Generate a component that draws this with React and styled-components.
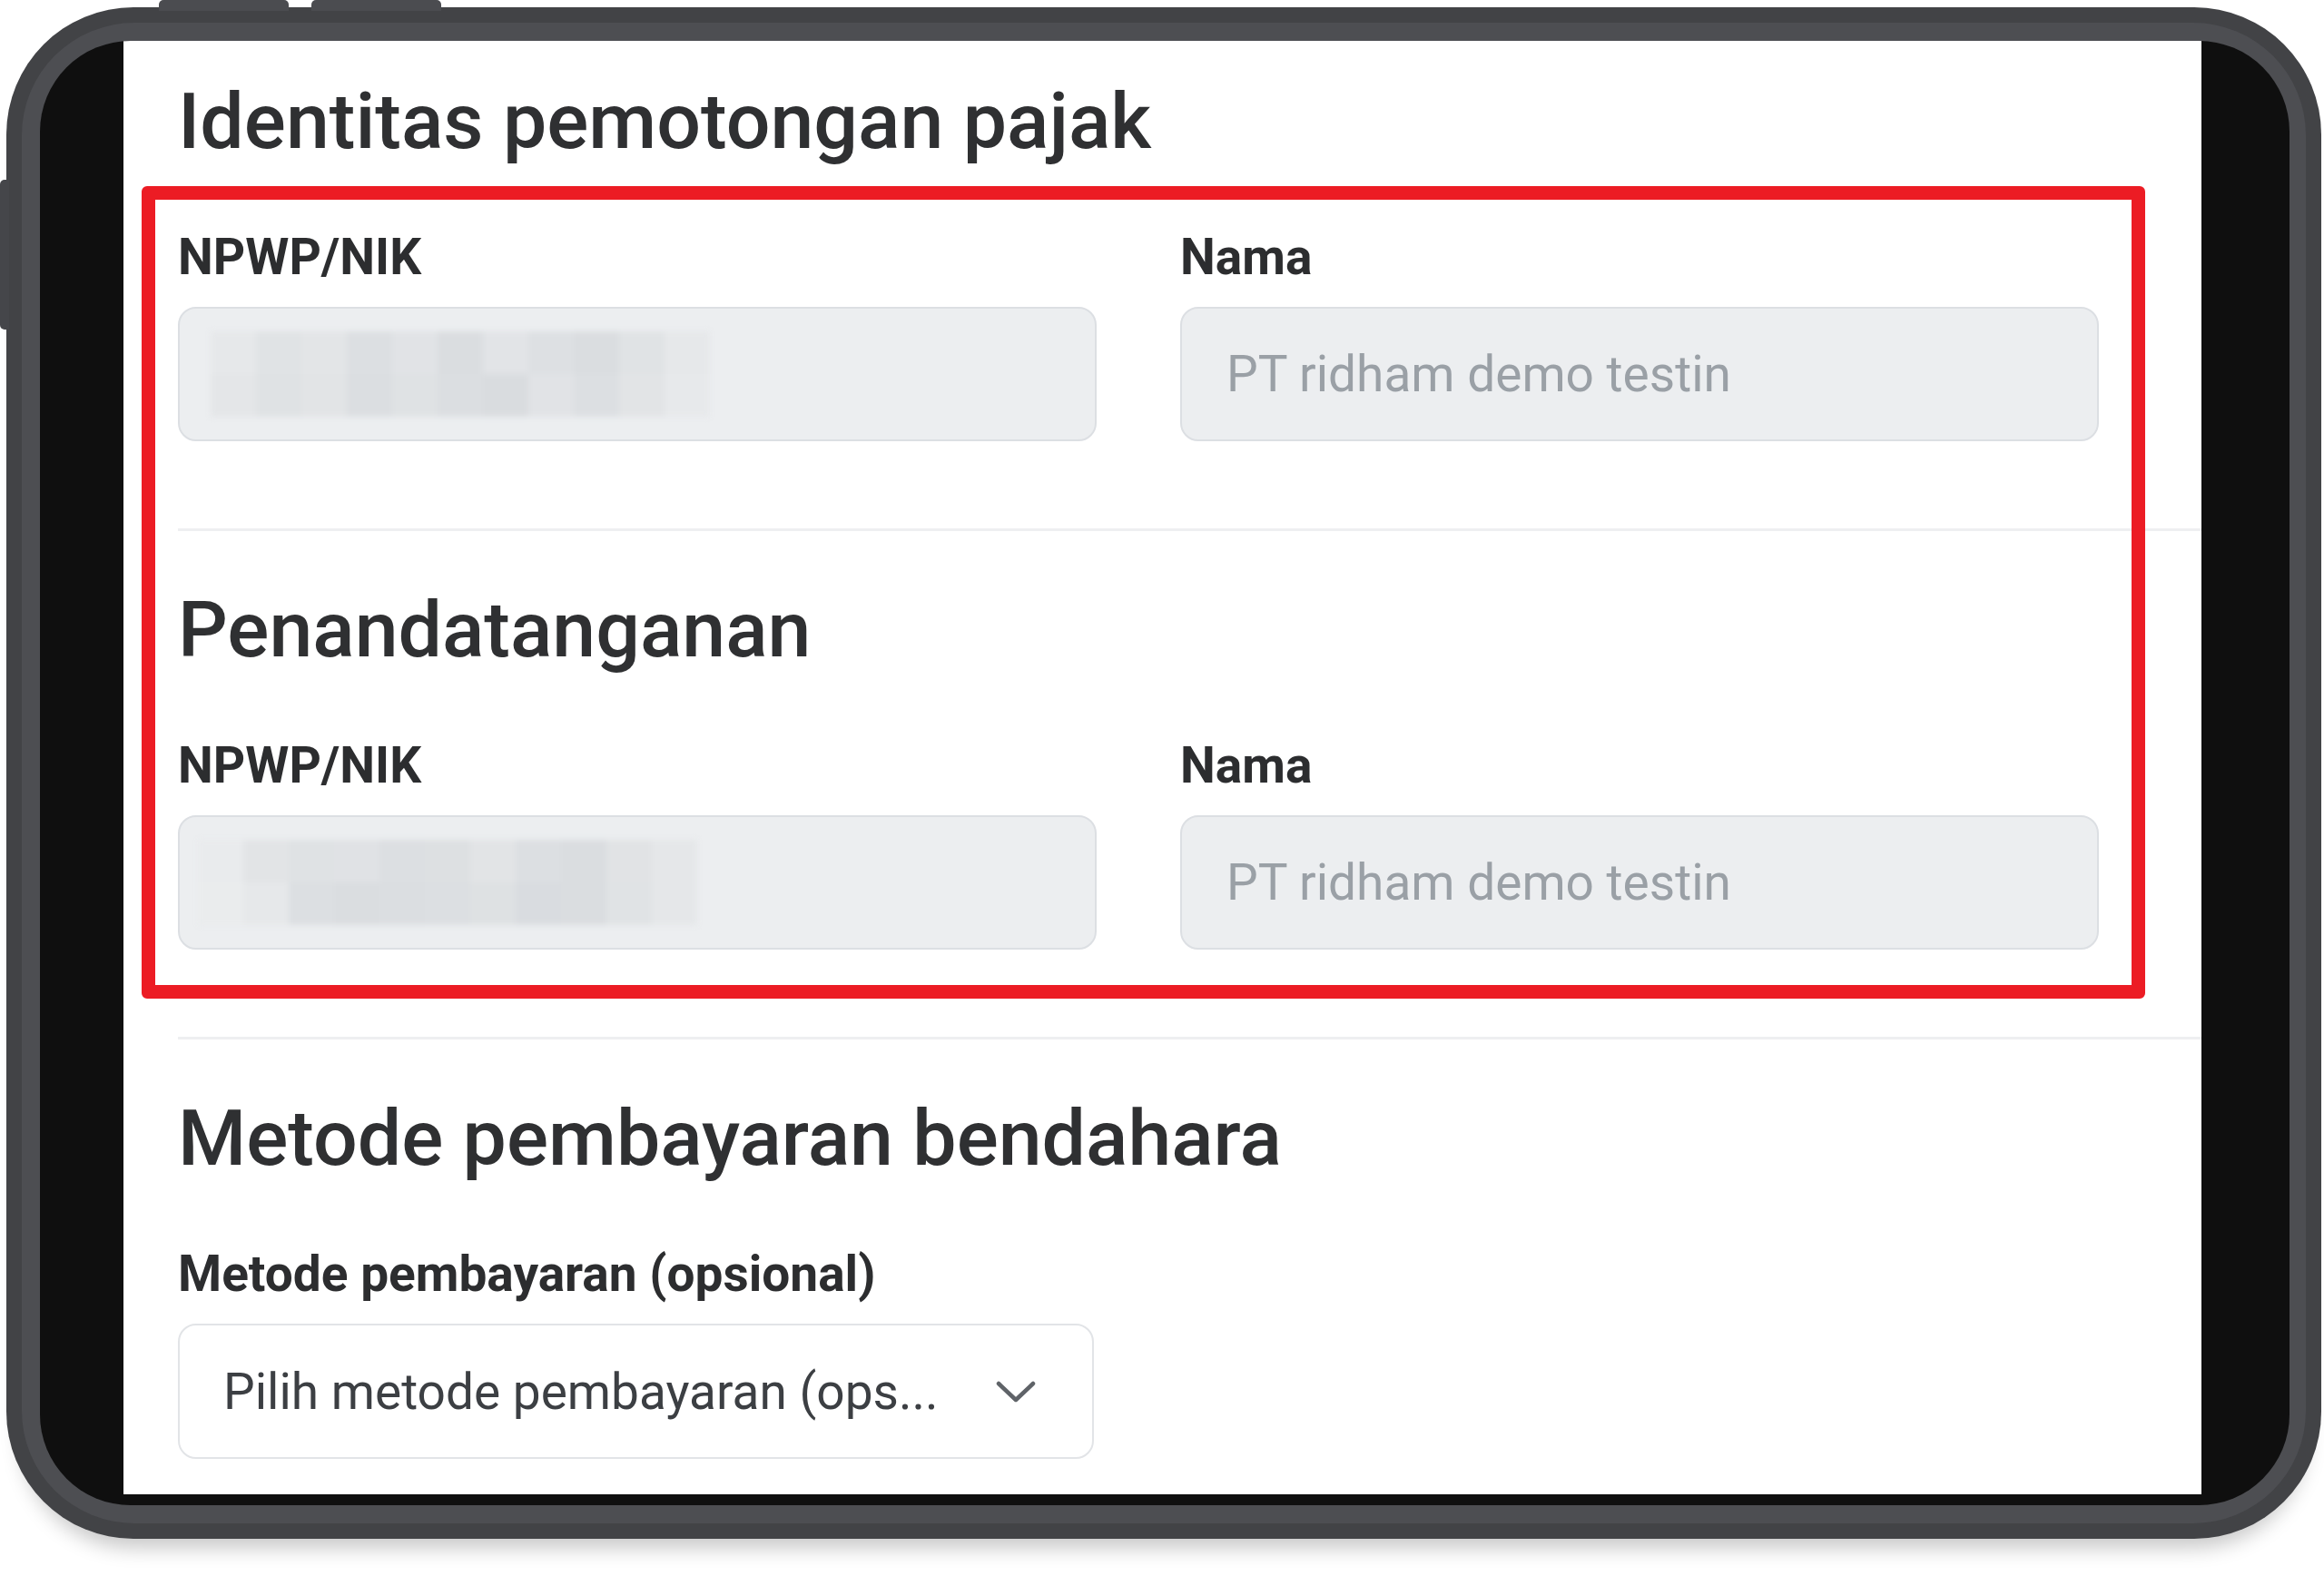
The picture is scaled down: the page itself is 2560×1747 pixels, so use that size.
import React from 'react';
import styled, { createGlobalStyle } from 'styled-components';

const GlobalStyle = createGlobalStyle`
  html, body {
    margin: 0;
    padding: 0;
    background: #ffffff;
  }
  body {
    font-family: Roboto, "Liberation Sans", Arial, sans-serif;
    -webkit-font-smoothing: antialiased;
  }
`;

const mosaicTop = ['#e6e8ea', '#e0e3e5', '#e3e5e7', '#dcdfe2', '#e1e3e6', '#dadde0', '#e2e4e7', '#dde0e3', '#dadde0', '#e0e3e5', '#e6e8ea'];
const mosaicBottom = ['#e4e6e8', '#dfe2e4', '#e2e4e6', '#dbdee1', '#dfe2e4', '#dbdee1', '#d9dcdf', '#e1e3e6', '#dcdfe2', '#e2e4e6', '#e7e9eb'];

const signerTop = ['#e9ebed', '#e2e4e6', '#dfe2e4', '#e0e2e5', '#dcdfe2', '#dde0e2', '#e2e4e6', '#dcdfe2', '#dadde0', '#e1e3e5', '#e5e7e9'];
const signerBottom = ['#eaeced', '#e6e8ea', '#dcdfe2', '#dadde0', '#dbdee1', '#dcdfe2', '#dee1e3', '#d9dce0', '#dadde0', '#e0e3e5', '#e5e7e9'];

const App = () => {
    return (
        <React.Fragment>
            <GlobalStyle />
            <Stage>
                <TopButton left="175px" />
                <TopButton left="343px" />
                <SideButton />
                <Device>
                    <Bezel>
                        <Screen>
                            <Panel>
                                <Highlight />
                                <Heading>Identitas pemotongan pajak</Heading>
                                <FieldGrid>
                                    <Field>
                                        <Label>NPWP/NIK</Label>
                                        <Input>
                                            <Mosaic offset="34px">
                                                <MosaicRow>
                                                    {mosaicTop.map((c, i) => <Block key={i} shade={c} />)}
                                                </MosaicRow>
                                                <MosaicRow>
                                                    {mosaicBottom.map((c, i) => <Block key={i} shade={c} />)}
                                                </MosaicRow>
                                            </Mosaic>
                                        </Input>
                                    </Field>
                                    <Field>
                                        <Label>Nama</Label>
                                        <Input>
                                            <Placeholder>PT ridham demo testin</Placeholder>
                                        </Input>
                                    </Field>
                                </FieldGrid>
                                <Divider />
                                <Heading>Penandatanganan</Heading>
                                <FieldGrid>
                                    <Field>
                                        <Label>NPWP/NIK</Label>
                                        <Input>
                                            <Mosaic offset="20px">
                                                <MosaicRow>
                                                    {signerTop.map((c, i) => <Block key={i} shade={c} />)}
                                                </MosaicRow>
                                                <MosaicRow>
                                                    {signerBottom.map((c, i) => <Block key={i} shade={c} />)}
                                                </MosaicRow>
                                            </Mosaic>
                                        </Input>
                                    </Field>
                                    <Field>
                                        <Label>Nama</Label>
                                        <Input>
                                            <Placeholder>PT ridham demo testin</Placeholder>
                                        </Input>
                                    </Field>
                                </FieldGrid>
                                <Divider />
                                <Heading>Metode pembayaran bendahara</Heading>
                                <Field>
                                    <Label>Metode pembayaran (opsional)</Label>
                                    <Select>
                                        <SelectText>Pilih metode pembayaran (ops...</SelectText>
                                        <svg width="44" height="24" viewBox="0 0 44 24" fill="none">
                                            <polyline points="3,3 22,21 41,3" stroke="#5f6368" strokeWidth="4.5" strokeLinecap="round" strokeLinejoin="round" />
                                        </svg>
                                    </Select>
                                </Field>
                            </Panel>
                        </Screen>
                    </Bezel>
                </Device>
            </Stage>
        </React.Fragment>
    )
}

const Stage = styled.div`
    position: relative;
    width: 2560px;
    height: 1747px;
    box-sizing: border-box;
    padding: 8px 0 0 7px;
    background: #ffffff;
    overflow: hidden;
`;

const TopButton = styled.div`
    position: absolute;
    top: 0;
    left: ${(p) => p.left};
    width: 143px;
    height: 12px;
    background: #4b4c50;
    border-radius: 5px 5px 0 0;
`;

const SideButton = styled.div`
    position: absolute;
    left: 0;
    top: 198px;
    width: 10px;
    height: 165px;
    background: #45464a;
    border-radius: 5px 0 0 5px;
`;

const Device = styled.div`
    width: 2550px;
    height: 1687px;
    box-sizing: border-box;
    padding: 17px;
    border-radius: 140px;
    background: #424346;
    box-shadow: 0 26px 22px -16px rgba(0, 0, 0, 0.22);
`;

const Bezel = styled.div`
    height: 100%;
    box-sizing: border-box;
    padding: 20px 18px 20px 20px;
    border-radius: 124px;
    background: #4d4e52;
`;

const Screen = styled.div`
    height: 100%;
    box-sizing: border-box;
    display: flex;
    padding: 0 97px 12px 92px;
    border-radius: 100px;
    background: #0f0f0f;
    overflow: hidden;
`;

const Panel = styled.div`
    position: relative;
    flex: 1;
    display: flex;
    flex-direction: column;
    align-items: flex-start;
    padding: 39px 0 0 60px;
    background: #ffffff;
    overflow: hidden;
`;

const Highlight = styled.div`
    position: absolute;
    left: 20px;
    top: 160px;
    width: 2207px;
    height: 895px;
    box-sizing: border-box;
    border: 15px solid #ec1c24;
    border-radius: 6px;
    pointer-events: none;
`;

const Heading = styled.h2`
    margin: 0 0 67px 0;
    font-size: 86px;
    line-height: 100px;
    font-weight: 500;
    color: #2f3032;
    white-space: nowrap;
`;

const FieldGrid = styled.div`
    display: grid;
    grid-template-columns: 1012px 1012px;
    column-gap: 92px;
`;

const Field = styled.div`
    display: flex;
    flex-direction: column;
`;

const Label = styled.label`
    margin-bottom: 23px;
    font-size: 55px;
    line-height: 64px;
    font-weight: 700;
    color: #2c2d2f;
    white-space: nowrap;
`;

const Input = styled.div`
    display: flex;
    align-items: center;
    width: 1012px;
    height: 148px;
    box-sizing: border-box;
    padding-left: 49px;
    background: #eceef0;
    border: 2px solid #dcdfe3;
    border-radius: 20px;
`;

const Placeholder = styled.span`
    font-size: 55px;
    color: #9aa0a6;
    white-space: nowrap;
`;

const Mosaic = styled.div`
    display: flex;
    flex-direction: column;
    margin-left: calc(${(p) => p.offset} - 49px);
    filter: blur(3px);
`;

const MosaicRow = styled.div`
    display: flex;
    height: 47px;
`;

const Block = styled.div`
    width: 50px;
    height: 100%;
    background: ${(p) => p.shade};
`;

const Divider = styled.div`
    align-self: stretch;
    height: 3px;
    margin: 96px 0 59px 0;
    background: #eeeff1;
`;

const Select = styled.div`
    display: flex;
    align-items: center;
    justify-content: space-between;
    width: 1009px;
    height: 149px;
    box-sizing: border-box;
    padding: 0 62px 0 48px;
    background: #ffffff;
    border: 2px solid #e2e4e7;
    border-radius: 20px;
`;

const SelectText = styled.span`
    font-size: 55px;
    color: #3c3f43;
    white-space: nowrap;
`;

export default App;
